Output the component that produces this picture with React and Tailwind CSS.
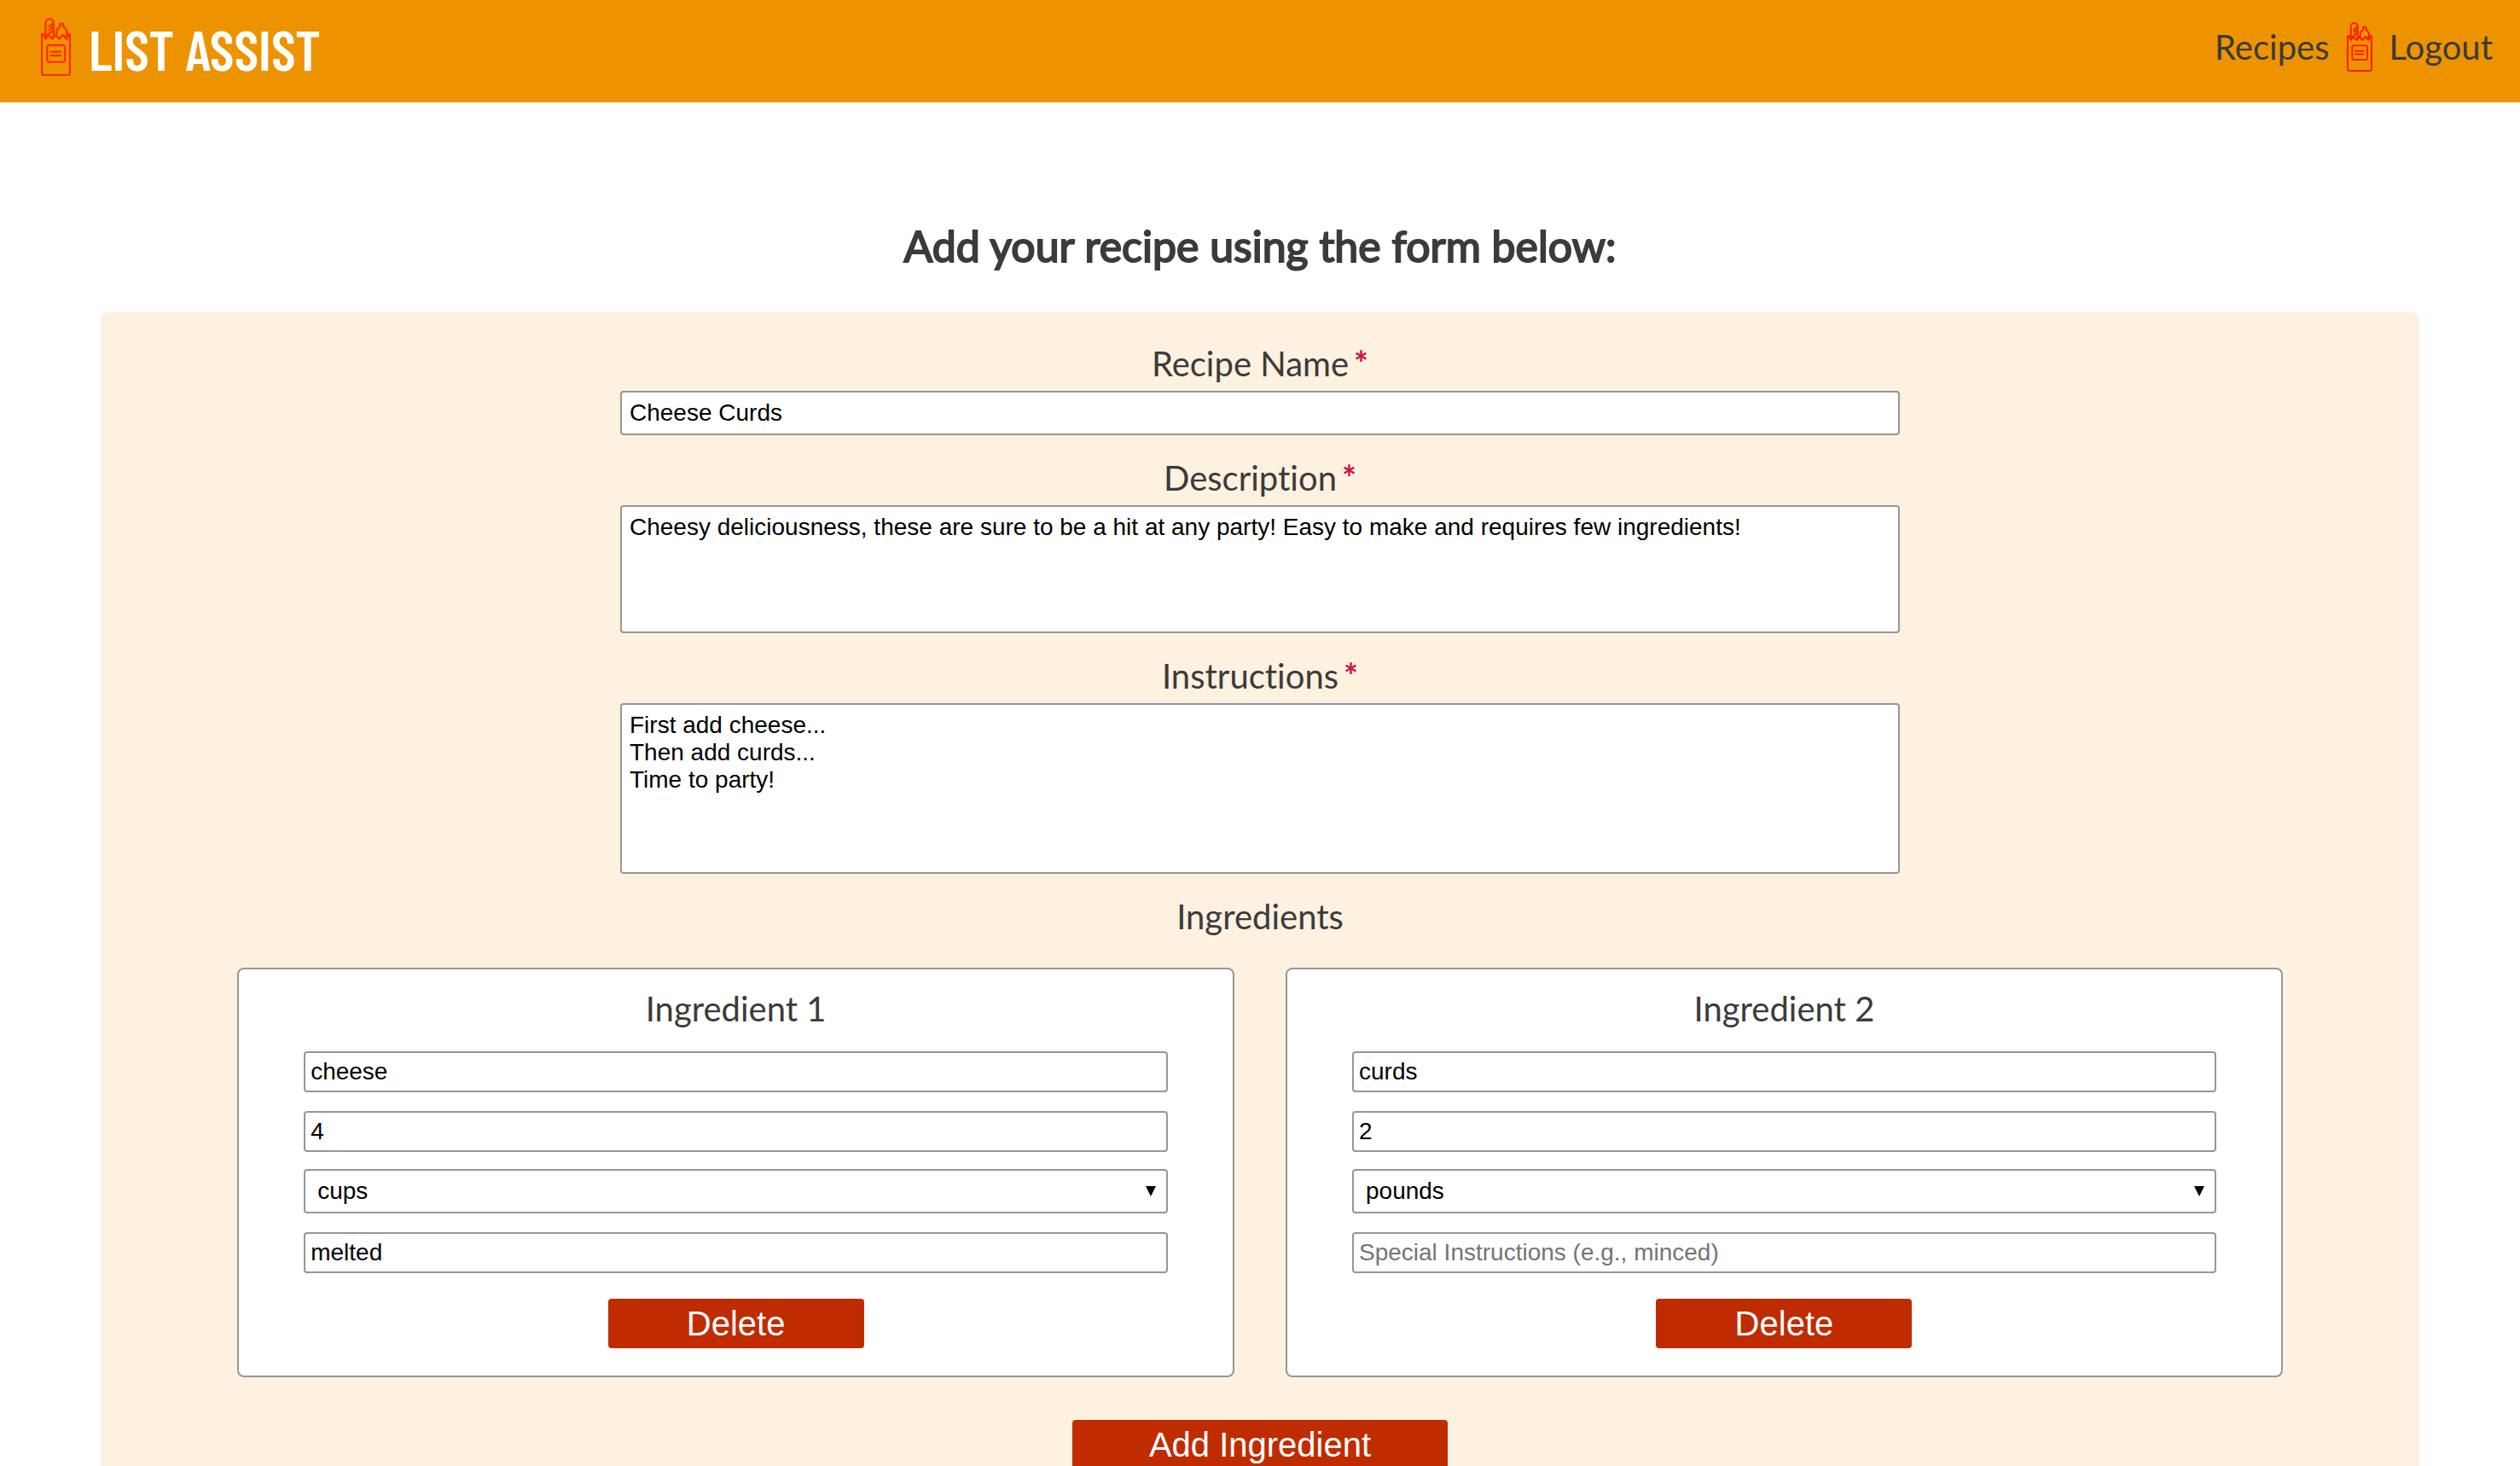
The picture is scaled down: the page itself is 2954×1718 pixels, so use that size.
import React from "react";

const CONTROL =
  "block w-full rounded border-2 border-[#979797] bg-white font-['Liberation_Sans',Arial,sans-serif] text-[28px] leading-8 text-black placeholder:text-[#757575]";
const BUTTON =
  "rounded bg-[#bf2c00] py-1.5 text-center font-['Liberation_Sans',Arial,sans-serif] text-[40px] leading-[46px] text-white";

function GroceryBag({ className }) {
  return (
    <svg
      viewBox="0 0 90 174"
      className={className}
      fill="none"
      stroke="currentColor"
      strokeWidth="6"
      strokeLinejoin="round"
      strokeLinecap="round"
      aria-hidden="true"
    >
      <path d="M3 48.5V165q0 6 6 6h72q6 0 6-6V48.5H82L77 63L66 51L55 63L45 51L34 63L22 51L15 63L9 48.5Z" />
      <path d="M14 54V15a12 12 0 0 1 24 0V54" />
      <path d="M25 25L37 17M25 35L37 27M25 46L37 38" />
      <path d="M57 27V17.500H67.500V27Q78 33 78 43V57M57 27Q47 33 47 43V48" />
      <path d="M9 50L15 61L21 50M71 54L77 61L82 50" />
      <rect x="19" y="82" width="53" height="50" rx="6" />
      <path d="M30 101.500H59M30 112.500H59" />
    </svg>
  );
}

function Header() {
  return (
    <header className="flex items-center justify-between bg-[#ed9300] pt-3.5 pr-8 pb-[25px] pl-[47px]">
      <a href="#home" className="flex items-center gap-5 text-white">
        <GroceryBag className="h-[68px] w-[37px] text-[#fa3200]" />
        <span className="pt-1 font-['Barlow_Condensed','Roboto_Condensed',sans-serif] text-[66px] leading-[77px] font-semibold">
          LIST ASSIST
        </span>
      </a>
      <nav className="flex items-center gap-5 text-[40px] leading-[48px]">
        <a href="#recipes">Recipes</a>
        <GroceryBag className="h-[58px] w-[30px] text-[#ff1e00]" />
        <a href="#logout">Logout</a>
      </nav>
    </header>
  );
}

function Field({ id, label, children }) {
  return (
    <div className="flex flex-col gap-2">
      <label htmlFor={id} className="text-center">
        {label}
        <span className="ml-1.5 font-bold text-[#d0104c]">*</span>
      </label>
      {children}
    </div>
  );
}

function IngredientCard({ index, name, amount, unit, note }) {
  const id = `ingredient-${index}`;
  return (
    <fieldset className="flex min-w-0 flex-col items-center rounded-lg border-2 border-[#979797] bg-white px-19 pt-[22px] pb-8">
      <h3 className="mb-[26px]">Ingredient {index}</h3>
      <input
        id={`${id}-name`}
        aria-label="Ingredient name"
        defaultValue={name}
        className={`${CONTROL} mb-[22px] px-1.5 py-1.5`}
      />
      <input
        id={`${id}-amount`}
        aria-label="Amount"
        defaultValue={amount}
        className={`${CONTROL} mb-5 px-1.5 py-1.5`}
      />
      <div className="relative mb-[22px] w-full">
        <select
          id={`${id}-unit`}
          aria-label="Unit"
          defaultValue={unit}
          className={`${CONTROL} appearance-none px-3.5 py-2`}
        >
          <option>cups</option>
          <option>pounds</option>
        </select>
        <svg
          viewBox="0 0 12 12"
          className="pointer-events-none absolute top-5 right-3.5 size-3"
          aria-hidden="true"
        >
          <path d="M0 0H12L6 12Z" fill="black" />
        </svg>
      </div>
      <input
        id={`${id}-note`}
        aria-label="Special instructions"
        placeholder="Special Instructions (e.g., minced)"
        defaultValue={note}
        className={`${CONTROL} mb-[30px] px-1.5 py-1.5`}
      />
      <button type="button" className={`${BUTTON} w-[300px]`}>
        Delete
      </button>
    </fieldset>
  );
}

export default function App() {
  return (
    <div className="h-screen overflow-hidden bg-white font-['Lato',sans-serif] text-[40px] leading-[48px] text-[#3b3b3b] [font-variant-ligatures:none]">
      <Header />
      <main className="px-[4%] pt-[138px]">
        <h1 className="mb-12 text-center text-[50px] leading-[60px] [-webkit-text-stroke:2px]">
          Add your recipe using the form below:
        </h1>
        <form className="flex flex-col rounded-lg bg-[#fdf1df] px-40 pt-9 pb-20">
          <div className="mx-auto flex w-full max-w-[1500px] flex-col gap-[26px]">
            <Field id="recipe-name" label="Recipe Name">
              <input
                id="recipe-name"
                defaultValue="Cheese Curds"
                className={`${CONTROL} px-[9px] py-2`}
              />
            </Field>
            <Field id="description" label="Description">
              <textarea
                id="description"
                defaultValue="Cheesy deliciousness, these are sure to be a hit at any party! Easy to make and requires few ingredients!"
                className={`${CONTROL} h-[150px] resize-none px-[9px] py-2`}
              />
            </Field>
            <Field id="instructions" label="Instructions">
              <textarea
                id="instructions"
                defaultValue={"First add cheese...\nThen add curds...\nTime to party!"}
                className={`${CONTROL} h-[200px] resize-none px-[9px] py-2`}
              />
            </Field>
            <h2 className="text-center">Ingredients</h2>
          </div>
          <div className="mt-9 grid grid-cols-2 gap-15">
            <IngredientCard index={1} name="cheese" amount="4" unit="cups" note="melted" />
            <IngredientCard index={2} name="curds" amount="2" unit="pounds" note="" />
          </div>
          <button type="button" className={`${BUTTON} mx-auto mt-[50px] w-[440px]`}>
            Add Ingredient
          </button>
        </form>
      </main>
    </div>
  );
}
